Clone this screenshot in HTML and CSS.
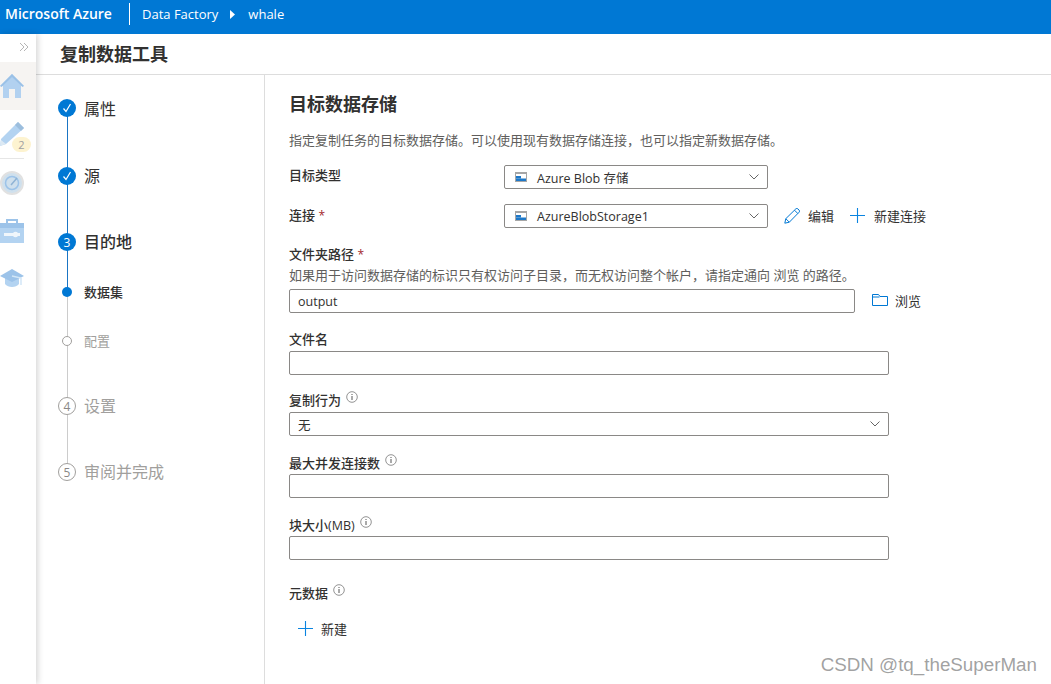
FILE: index.html
```html
<!DOCTYPE html>
<html lang="zh-CN">
<head>
<meta charset="utf-8">
<title>复制数据工具</title>
<link rel="stylesheet" href="styles.css">
</head>
<body>
<header class="topbar">
  <span class="brand">Microsoft Azure</span>
  <span class="crumbs">
    <span>Data Factory</span>
    <svg class="crumb-arrow" viewBox="0 0 5 9" width="5" height="9"><path d="M0 0l5 4.500-5 4.500z" fill="#fff"/></svg>
    <span>whale</span>
  </span>
</header>
<div class="app">
  <nav class="rail">
    <svg class="expand" viewBox="0 0 10 10" width="10" height="10"><path d="M1 1l4 4-4 4M5 1l4 4-4 4" fill="none" stroke="#b5b5b5" stroke-width="1"/></svg>
    <div class="rail-item rail-home">
      <svg viewBox="0 0 24 24" width="24" height="24"><path d="M12 0L24 12h-3v12H3V12H0z" fill="#a9cdf0"/><path d="M12 0L24 12l-1.500 1L12 3 1.500 13 0 12z" fill="#8fbbe6"/><rect x="9" y="15" width="6" height="9" fill="#f5f3f1"/></svg>
    </div>
    <div class="rail-item rail-edit">
      <svg viewBox="0 0 24 24" width="24" height="24"><path d="M18 0l6 6L6 22l-6 2 1-7z" fill="#a9cdf0"/><path d="M18 0l6 6-3 3-6-6z" fill="#8fb6d9"/><path d="M0 24l1-6 5 4z" fill="#d8e6f2"/></svg>
      <span class="badge">2</span>
    </div>
    <div class="rail-rule"></div>
    <div class="rail-item rail-gauge">
      <svg viewBox="0 0 24 24" width="24" height="24"><circle cx="12" cy="12" r="11" fill="#c9dceb" stroke="#dedede" stroke-width="2"/><circle cx="12" cy="12" r="6.500" fill="none" stroke="#8fbbe6" stroke-width="1.500"/><path d="M11 14l6-7" stroke="#7fa9cf" stroke-width="1.500"/></svg>
    </div>
    <div class="rail-item rail-tools">
      <svg viewBox="0 0 24 25" width="24" height="25"><path d="M6 5V1h12v4h-2V3H8v2z" fill="#8fbbe6"/><rect y="5" width="24" height="20" fill="#a9cdf0"/><rect y="5" width="24" height="5" fill="#8fbbe6"/><path d="M4 15h9a3 3 0 0 1 5 0h2v3h-2a3 3 0 0 1-5 0H4z" fill="#eef5fb"/></svg>
    </div>
    <div class="rail-item rail-learn">
      <svg viewBox="0 0 24 19" width="24" height="19"><path d="M5 8v7c3 4 11 4 14 0V8z" fill="#a9cdf0"/><path d="M12 0L24 7 12 13 0 7z" fill="#8fbbe6"/><path d="M12 7l9 2v7" fill="none" stroke="#cde4f7" stroke-width="1.500"/></svg>
    </div>
  </nav>
  <main class="main">
    <h1 class="page-title">复制数据工具</h1>
    <div class="panes">
      <ol class="steps">
        <li class="step step-done step-first"><span class="marker"><svg viewBox="0 0 10 10" width="10" height="10"><path d="M1.500 5.500L4 8.500 8.500 1" fill="none" stroke="#fff" stroke-width="1.200"/></svg></span>属性</li>
        <li class="step step-done step-src"><span class="marker"><svg viewBox="0 0 10 10" width="10" height="10"><path d="M1.500 5.500L4 8.500 8.500 1" fill="none" stroke="#fff" stroke-width="1.200"/></svg></span>源</li>
        <li class="step step-current"><span class="marker">3</span>目的地</li>
        <li class="step substep substep-on"><span class="dot"></span>数据集</li>
        <li class="step substep substep-off"><span class="dot"></span>配置</li>
        <li class="step step-todo"><span class="marker">4</span>设置</li>
        <li class="step step-todo step-last"><span class="marker">5</span>审阅并完成</li>
      </ol>
      <section class="form">
        <h2 class="form-title">目标数据存储</h2>
        <p class="intro">指定复制任务的目标数据存储。可以使用现有数据存储连接，也可以指定新数据存储。</p>

        <div class="row row-type">
          <label class="label row-label">目标类型</label>
          <div class="box select select-narrow">
            <svg class="blob" viewBox="0 0 12 10" width="12" height="10"><rect width="12" height="10" fill="#a6a6a6"/><rect x="1" y="2" width="10" height="7" fill="#fff"/><rect x="1" y="4" width="5" height="2.500" fill="#1e78c8"/><rect x="1" y="6.500" width="10" height="2.500" fill="#1e78c8"/></svg>
            <span class="value">Azure Blob 存储</span>
            <svg class="chev" viewBox="0 0 10 6" width="10" height="6"><path d="M.5.5L5 5 9.500.5" fill="none" stroke="#666" stroke-width="1"/></svg>
          </div>
        </div>

        <div class="row row-conn">
          <label class="label row-label">连接 <span class="req">*</span></label>
          <div class="box select select-narrow">
            <svg class="blob" viewBox="0 0 12 10" width="12" height="10"><rect width="12" height="10" fill="#a6a6a6"/><rect x="1" y="2" width="10" height="7" fill="#fff"/><rect x="1" y="4" width="5" height="2.500" fill="#1e78c8"/><rect x="1" y="6.500" width="10" height="2.500" fill="#1e78c8"/></svg>
            <span class="value">AzureBlobStorage1</span>
            <svg class="chev" viewBox="0 0 10 6" width="10" height="6"><path d="M.5.5L5 5 9.500.5" fill="none" stroke="#666" stroke-width="1"/></svg>
          </div>
          <span class="action action-edit">
            <svg viewBox="0 0 16 16" width="16" height="16"><path d="M.8 15.200l1-4.500L11.800.9a1.500 1.500 0 0 1 2.100 0l1.200 1.200a1.500 1.500 0 0 1 0 2.100L5.300 14.200zM1.800 10.700l3.500 3.500M10.500 2.200l3.300 3.300" fill="none" stroke="#0078d4" stroke-width="1"/></svg>
            编辑
          </span>
          <span class="action action-new">
            <svg class="plus" viewBox="0 0 15 15" width="15" height="15"><path d="M7.500 0v15M0 7.500h15" stroke="#0a84e0" stroke-width="1.100"/></svg>
            新建连接
          </span>
        </div>

        <div class="field field-path">
          <label class="label">文件夹路径 <span class="req">*</span></label>
          <p class="help">如果用于访问数据存储的标识只有权访问子目录，而无权访问整个帐户，请指定通向 浏览 的路径。</p>
          <div class="path-row">
            <div class="box input input-path"><span class="value">output</span></div>
            <span class="action action-browse">
              <svg viewBox="0 0 16 12" width="16" height="12"><path d="M.5 11.500V.5h6l1.500 2h7.500v9zM.5 3h7" fill="none" stroke="#0078d4" stroke-width="1"/></svg>
              浏览
            </span>
          </div>
        </div>

        <div class="field field-file">
          <label class="label">文件名</label>
          <div class="box input input-wide"></div>
        </div>

        <div class="field field-copy">
          <label class="label">复制行为<svg class="info" viewBox="0 0 12 12" width="12" height="12"><circle cx="6" cy="6" r="5.300" fill="none" stroke="#777" stroke-width=".8"/><path d="M6 5v4M6 3v1" stroke="#555" stroke-width="1"/></svg></label>
          <div class="box select input-wide">
            <span class="value value-plain">无</span>
            <svg class="chev" viewBox="0 0 10 6" width="10" height="6"><path d="M.5.5L5 5 9.500.5" fill="none" stroke="#666" stroke-width="1"/></svg>
          </div>
        </div>

        <div class="field field-conc">
          <label class="label">最大并发连接数<svg class="info" viewBox="0 0 12 12" width="12" height="12"><circle cx="6" cy="6" r="5.300" fill="none" stroke="#777" stroke-width=".8"/><path d="M6 5v4M6 3v1" stroke="#555" stroke-width="1"/></svg></label>
          <div class="box input input-wide"></div>
        </div>

        <div class="field field-block">
          <label class="label">块大小<span class="unit">(MB)</span><svg class="info" viewBox="0 0 12 12" width="12" height="12"><circle cx="6" cy="6" r="5.300" fill="none" stroke="#777" stroke-width=".8"/><path d="M6 5v4M6 3v1" stroke="#555" stroke-width="1"/></svg></label>
          <div class="box input input-wide"></div>
        </div>

        <div class="field field-meta">
          <label class="label">元数据<svg class="info" viewBox="0 0 12 12" width="12" height="12"><circle cx="6" cy="6" r="5.300" fill="none" stroke="#777" stroke-width=".8"/><path d="M6 5v4M6 3v1" stroke="#555" stroke-width="1"/></svg></label>
          <span class="action action-add">
            <svg class="plus" viewBox="0 0 15 15" width="15" height="15"><path d="M7.500 0v15M0 7.500h15" stroke="#0a84e0" stroke-width="1.100"/></svg>
            新建
          </span>
        </div>
      </section>
    </div>
  </main>
</div>
<div class="watermark">CSDN @tq_theSuperMan</div>
</body>
</html>
```

FILE: styles.css
```css
* { box-sizing: border-box; }
html, body { margin: 0; padding: 0; }
body {
  width: 1051px;
  height: 684px;
  overflow: hidden;
  background: #fff;
  color: #323130;
  font-family: "Open Sans", "Noto Sans CJK SC", sans-serif;
  font-size: 13px;
  position: relative;
}
ol, p, h1, h2 { margin: 0; padding: 0; }

.topbar {
  height: 34px;
  background: #0078d4;
  color: #fff;
  display: flex;
  align-items: center;
  padding: 0 0 6px 5px;
}
.brand {
  font-weight: 600;
  font-size: 14px;
  width: 124px;
  line-height: 22px;
  white-space: nowrap;
}
.crumbs {
  display: flex;
  align-items: center;
  height: 22px;
  border-left: 1px solid #fff;
  padding-left: 12px;
  gap: 11px;
  font-size: 13px;
}
.crumb-arrow { margin: 0 2px 0 1px; }

.app { display: flex; height: 650px; }

.rail {
  width: 36px;
  flex: none;
  background: #fff;
  box-shadow: 2px 0 6px rgba(0,0,0,.16);
  position: relative;
  z-index: 1;
  padding-top: 8px;
}
.rail-item svg { opacity: .88; }
.expand { display: block; margin: 0 0 0 19px; }
.rail-item { position: relative; display: flex; }
.rail-home {
  margin-top: 10px;
  height: 48px;
  background: #f6f4f2;
  padding-top: 12px;
}
.rail-edit { margin-top: 12px; height: 24px; }
.badge {
  position: absolute;
  left: 12px;
  top: 15px;
  width: 19px;
  height: 15px;
  border-radius: 8px;
  background: #fdf3d0;
  color: #a0a0a0;
  font-size: 11px;
  line-height: 15px;
  text-align: center;
}
.rail-rule { width: 24px; height: 1px; background: #e6e6e6; margin-top: 12px; }
.rail-gauge { margin-top: 12px; }
.rail-tools { margin-top: 23px; }
.rail-learn { margin-top: 26px; }

.main { flex: 1; display: flex; flex-direction: column; min-width: 0; }
.page-title {
  height: 41px;
  border-bottom: 1px solid #ddd;
  padding-left: 24px;
  font-size: 18px;
  font-weight: 700;
  line-height: 41px;
}
.panes { flex: 1; display: flex; min-height: 0; }

.steps {
  width: 229px;
  flex: none;
  border-right: 1px solid #ddd;
  list-style: none;
  padding-top: 22px;
}
.step {
  position: relative;
  display: flex;
  align-items: center;
  height: 22px;
  padding-left: 22px;
  font-size: 16px;
  color: #323130;
}
.step::before {
  content: "";
  position: absolute;
  left: 31px;
  width: 1px;
  top: 11px;
  background: #1a75c4;
  z-index: 0;
}
.marker {
  width: 18px;
  height: 18px;
  border-radius: 50%;
  background: #0078d4;
  color: #fff;
  font-size: 12px;
  display: flex;
  align-items: center;
  justify-content: center;
  margin-right: 8px;
  position: relative;
  top: 1px;
  z-index: 1;
  flex: none;
}
.step-first .marker { top: 0; }
.step-done { margin-bottom: 45px; }
.step-done::before { height: 67px; }
.step-src::before { height: 66px; }
.step-src { margin-bottom: 44px; }
.step-current { font-weight: 500; margin-bottom: 28px; }
.step-current::before { height: 50px; }
.substep { font-size: 13px; padding-left: 26px; }
.dot {
  width: 10px;
  height: 10px;
  border-radius: 50%;
  background: #0078d4;
  margin-right: 12px;
  position: relative;
  top: 1px;
  z-index: 1;
  flex: none;
}
.substep-on { font-weight: 500; margin-bottom: 27px; }
.substep-on::before { background: #ccc; height: 49px; }
.substep-off { color: #a19f9d; margin-bottom: 43px; }
.substep-off::before { background: #ccc; height: 65px; }
.substep-off .dot { background: #fff; border: 1px solid #a19f9d; }
.step-todo { color: #a19f9d; margin-bottom: 44px; }
.step-todo::before { background: #ccc; height: 66px; }
.step-todo .marker { background: #fff; color: #8a8886; border: 1px solid #a19f9d; }
.step-last::before { display: none; }

.form { flex: 1; padding: 17px 0 0 24px; min-width: 0; }
.form-title { font-size: 18px; font-weight: 700; line-height: 24px; }
.intro { margin-top: 15px; line-height: 18px; color: #605e5c; font-size: 13px; white-space: nowrap; }

.row { display: flex; align-items: center; height: 24px; }
.row-type { margin-top: 16px; }
.row-conn { margin-top: 15px; }
.row-label { width: 215px; flex: none; margin-top: -4px; }
.row-conn .row-label { margin-top: -2px; }
.label { display: block; font-weight: 500; font-size: 13px; line-height: 18px; white-space: nowrap; }
.req { color: #a4262c; font-weight: 400; font-size: 12px; }
.unit { font-size: 12.500px; font-weight: 400; }
.info { margin-left: 5px; vertical-align: 2px; }
.plus { flex: none; }

.box {
  height: 24px;
  border: 1px solid #8a8886;
  border-radius: 2px;
  background: #fff;
  display: flex;
  align-items: center;
  flex: none;
}
.select-narrow { width: 264px; }
.input-wide { width: 600px; }
.input-path { width: 566px; }
.blob { margin-left: 10px; flex: none; }
.value { margin-left: 10px; font-size: 12.500px; color: #323130; white-space: nowrap; }
.value-plain { margin-left: 8px; }
.input .value { margin-left: 8px; }
.chev { margin-left: auto; margin-right: 8px; flex: none; }

.action { display: inline-flex; align-items: center; gap: 8px; white-space: nowrap; font-size: 13px; }
.action-edit { margin-left: 16px; margin-top: -1px; }
.action-new { margin-left: 16px; margin-top: -1px; gap: 9px; }

.field { display: block; }
.field-path { margin-top: 17px; }
.help { margin-top: 2px; line-height: 18px; font-size: 13px; color: #605e5c; white-space: nowrap; }
.path-row { display: flex; align-items: center; margin-top: 5px; }
.action-browse { margin-left: 17px; gap: 7px; padding-bottom: 2px; }
.field-file { margin-top: 17px; }
.field-file .box { margin-top: 3px; }
.field-copy { margin-top: 16px; }
.field-copy .box { margin-top: 3px; }
.field-conc { margin-top: 18px; }
.field-conc .box { margin-top: 2px; }
.field-block { margin-top: 18px; }
.field-block .box { margin-top: 1px; }
.field-meta { margin-top: 24px; }
.action-add { margin: 14px 0 0 9px; height: 24px; gap: 8px; }

.watermark {
  position: absolute;
  right: 14px;
  bottom: 8px;
  font-family: "Liberation Sans", sans-serif;
  font-size: 18.800px;
  line-height: 22px;
  color: rgba(120,120,120,.7);
}
```
